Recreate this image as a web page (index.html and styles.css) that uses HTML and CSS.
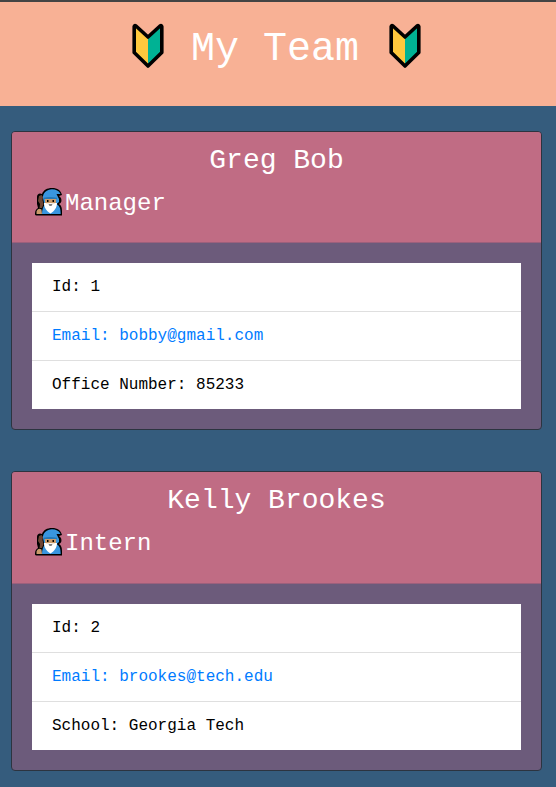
FILE: index.html
```html
<!DOCTYPE html>
<html lang="en">
<head>
<meta charset="utf-8">
<title>My Team</title>
<link rel="stylesheet" href="styles.css">
</head>
<body>
<svg class="defs" aria-hidden="true">
  <symbol id="leaf" viewBox="0 0 32 46">
    <path fill="#ffc83d" d="M2 2.500 16 14.500V43L2 29.500z"/>
    <path fill="#00b294" d="M30 2.500 16 14.500V43l14-13.500z"/>
    <path fill="none" stroke="#000" stroke-width="3.600" stroke-linejoin="round" d="M2.200 3.500Q2.500 2 4 3L16 14 28 3q1.500-1 1.800.5V29.500L16 43 2.200 29.500z"/>
  </symbol>
  <symbol id="mage" viewBox="0 0 27 28">
    <path fill="#000" d="M1.500 27.500C0 27.500 0 26.500 0 25.500c0-2.500 1-4.500 3-5.500L2 16V9c0-3 2.500-4.500 5-3C8.500 2 12 0 17 0c5.500 0 9 2.500 10 7l-3 1 2 2c1 3 .5 5-2 6 2.500 1.500 3 4 3 7v4.500z"/>
    <path fill="#6d4534" d="M4 8 6.500 7 8 9l-.5 3 1 4L7 20H4.500l.5-4-2-3z"/>
    <path fill="#3996df" d="M8 10C7.500 5 12 1.300 17 1.300c4 0 7 1.500 8.500 4.700h-4l2.500 5v3l-2.500 2c3 2 4.200 4 4.200 10H7c0-4 1-7 2.500-9z"/>
    <path fill="#c99b6b" d="M10 11h11v6l-4 2h-4l-3-2zM1.500 26v-2.500c1-3 3-3.500 5-2L7 26z"/>
    <path fill="#2477b5" d="M8.500 9.800c4-1 9-1 13.500 0V11H8.500z"/>
    <path fill="#fff" d="M9 15c2 0 3 .5 6.500 0 3.500.5 4.500 0 6.500 0 0 4.500-2.500 8-6.500 10.500C11.500 23 9 19.500 9 15z"/>
    <path fill="#000" d="M12 12h1.500v2H12zM17.500 12H19v2h-1.500zM13.500 16.500h4l-1 1h-2z"/>
  </symbol>
</svg>
<header class="banner">
  <svg class="leaf"><use href="#leaf"/></svg>
  <h1>My Team</h1>
  <svg class="leaf"><use href="#leaf"/></svg>
</header>
<main class="team">
  <section class="card">
    <div class="card-header">
      <h2>Greg Bob</h2>
      <h3><svg class="mage"><use href="#mage"/></svg>Manager</h3>
    </div>
    <ul class="details">
      <li>Id: 1</li>
      <li class="email">Email: bobby@gmail.com</li>
      <li>Office Number: 85233</li>
    </ul>
  </section>
  <section class="card">
    <div class="card-header">
      <h2>Kelly Brookes</h2>
      <h3><svg class="mage"><use href="#mage"/></svg>Intern</h3>
    </div>
    <ul class="details">
      <li>Id: 2</li>
      <li class="email">Email: brookes@tech.edu</li>
      <li>School: Georgia Tech</li>
    </ul>
  </section>
</main>
</body>
</html>
```
FILE: styles.css
```css
* { box-sizing: border-box; }
body {
  margin: 0;
  min-height: 787px;
  background: #355c7d;
  color: #000;
  font: 16px/24px "Liberation Mono", monospace;
}
h1, h2, h3, ul { margin: 0; padding: 0; font-weight: 400; }
.defs { display: none; }
.banner {
  display: flex;
  justify-content: center;
  gap: 27px;
  height: 106px;
  padding: 21px 3px 0 0;
  border-top: 2px solid #444;
  background: #f8b195;
  color: #fff;
}
.banner h1 { width: 171px; padding-top: 3px; font-size: 40px; line-height: 48px; white-space: nowrap; }
.leaf { width: 32px; height: 46px; }
.team {
  display: flex;
  flex-direction: column;
  gap: 40.8px;
  padding: 24.8px 14px 16px 11px;
}
.card {
  border: 1px solid #2c3440;
  border-radius: 4px;
  background: #6c5b7b;
  overflow: hidden;
}
.card-header {
  height: 111.6px;
  padding: 12px 23px;
  border-bottom: 1px solid #9c607c;
  background: #c06c84;
  color: #fff;
}
.card-header h2 { font-size: 28px; line-height: 34px; text-align: center; }
.card-header h3 {
  display: flex;
  gap: 3px;
  margin-top: 10px;
  font-size: 24px;
  line-height: 32px;
}
.mage { width: 27px; height: 28px; }
.details {
  margin: 20px;
  background: #fff;
  list-style: none;
}
.details li { height: 49px; padding: 12px 20px; border-bottom: 1px solid #dfdfdf; }
.details li:last-child { height: 48px; border-bottom: 0; }
.details .email { color: #007bff; }
```
